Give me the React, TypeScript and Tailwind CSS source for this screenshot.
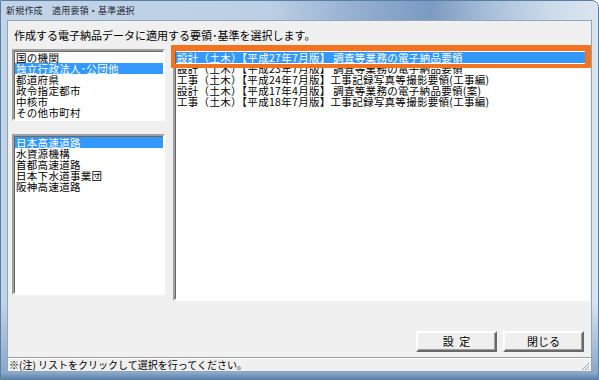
import React from 'react';

const FONT = { fontFamily: '"Noto Sans CJK JP", "Noto Sans", sans-serif' };

const topItems = ['国の機関', '独立行政法人･公団他', '都道府県', '政令指定都市', '中核市', 'その他市町村'];
const bottomItems = ['日本高速道路', '水資源機構', '首都高速道路', '日本下水道事業団', '阪神高速道路'];
const standards = [
  '設計（土木）【平成27年7月版】 調査等業務の電子納品要領',
  '設計（土木）【平成23年7月版】 調査等業務の電子納品要領',
  '工事（土木）【平成24年7月版】工事記録写真等撮影要領(工事編)',
  '設計（土木）【平成17年4月版】 調査等業務の電子納品要領(案)',
  '工事（土木）【平成18年7月版】工事記録写真等撮影要領(工事編)',
];

function ListBox({ items, selected, className }: { items: string[]; selected: number; className: string }) {
  return (
    <div
      className={`border-2 border-t-[#a0a0a0] border-l-[#a0a0a0] border-b-white border-r-white bg-white shadow-[inset_1px_1px_0_#696969] pt-[1px] pl-[1px] overflow-hidden ${className}`}
    >
      {items.map((it, i) => (
        <div
          key={it}
          className={`h-[11px] leading-[11px] text-[10.5px] tracking-[0.3px] whitespace-nowrap pl-[1px] ${
            i === selected ? 'bg-[#3399ff] text-white' : 'text-black'
          }`}
        >
          {it}
        </div>
      ))}
    </div>
  );
}

function Button({ label }: { label: string }) {
  return (
    <button className="w-[81px] h-[21px] border-2 border-t-white border-l-white border-b-[#696969] border-r-[#696969] bg-[#efefef] shadow-[inset_-1px_-1px_0_#a0a0a0] text-[11px] leading-[11px] text-black">
      {label}
    </button>
  );
}

export default function App() {
  return (
    <div className="relative w-[599px] h-[380px] bg-white" style={FONT}>
      <div className="w-[599px] h-[380px] flex flex-col rounded-tr-[7px] overflow-hidden bg-[linear-gradient(90deg,#c3d4e7_0%,#bccfe4_45%,#8eaace_62%,#7b9bc1_72%,#a9c0da_82%,#ccdbea_92%,#dbe5f0_100%)] border border-[#5b7ea5]">
        {/* title bar */}
        <div className="h-[20px] flex items-center pl-[5px] text-[9px] text-[#1e2a38] tracking-[0.2px]">
          新規作成　適用要領・基準選択
        </div>
        <div className="flex-1 flex px-[6px] bg-[linear-gradient(180deg,transparent_0%,transparent_80%,#8aa7c8_100%)]">
          {/* client */}
          <div className="flex-1 flex flex-col bg-[#f0f0f0] border border-[#8fa3ba] h-[352px]">
            <div className="pt-[8px] pl-[6px] h-[21px] text-[11px] leading-[13px] text-black">
              作成する電子納品データに適用する要領･基準を選択します。
            </div>
            <div className="flex pl-[4px] mt-[5px] gap-[8px]">
              <div className="flex flex-col pt-[2px] gap-[13px]">
                <ListBox items={topItems} selected={1} className="w-[153px] h-[72px]" />
                <ListBox items={bottomItems} selected={0} className="w-[153px] h-[161px]" />
              </div>
              <ListBox items={standards} selected={0} className="w-[417px] h-[254px] pt-[3px] pl-[1px]" />
            </div>
            <div className="flex justify-end gap-[6px] pr-[7px] mt-[30px]">
              <Button label={'設\u2002定'} />
              <Button label="閉じる" />
            </div>
            <div className="mt-auto h-[14px] border-t border-t-[#a0a0a0] shadow-[inset_0_1px_0_#fff] flex items-center justify-between pl-[1px]">
              <span className="text-[10px] leading-[12px] text-black">※(注) リストをクリックして選択を行ってください。</span>
              <svg width="10" height="10" viewBox="0 0 10 10" className="mr-[1px] mt-[2px]">
                <path d="M9 2 L2 9 M9 5 L5 9 M9 8 L8 9" stroke="#a0a0a0" strokeWidth="1" />
              </svg>
            </div>
          </div>
        </div>
        <div className="h-[7px] bg-[linear-gradient(180deg,#8fadcf_0%,#5f83ab_100%)]" />
      </div>
      {/* highlight annotation */}
      <div className="absolute left-[171px] top-[45px] w-[420px] h-[23px] border-t-[6px] border-l-[4px] border-r-[6px] border-b-[4px] border-[#f47321] rounded-[1px]" />
    </div>
  );
}
